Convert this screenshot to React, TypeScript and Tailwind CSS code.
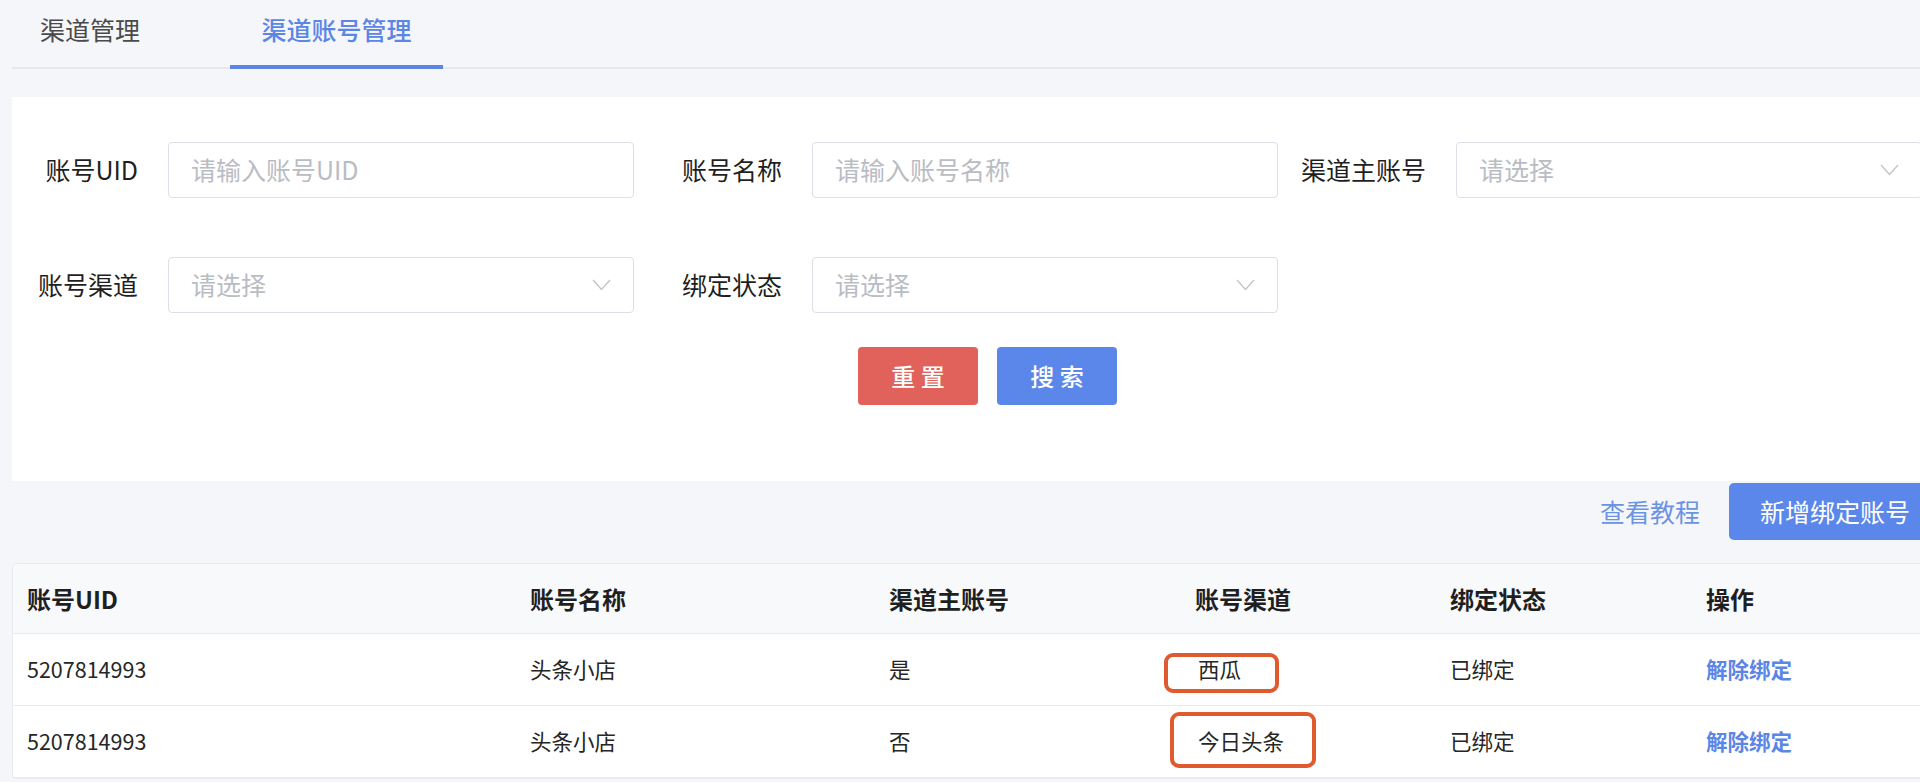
import React from "react";

function Chevron() {
  return (
    <svg width="19" height="12" viewBox="0 0 19 12" fill="none">
      <polyline points="1,1 9.5,10.5 18,1" stroke="#c0c4cc" strokeWidth="1.4" />
    </svg>
  );
}

function Field({ label, placeholder, select }: { label: string; placeholder: string; select?: boolean }) {
  return (
    <div className="flex items-center">
      <div className="w-[126px] text-right text-[25px] text-[#1f1f1f] whitespace-nowrap">{label}</div>
      <div className="ml-[30px] w-[466px] h-[56px] border border-[#dcdfe6] rounded-[4px] bg-white flex items-center justify-between pl-[22px] pr-[22px]">
        <span className="text-[25px] text-[#b9bcc3] whitespace-nowrap">{placeholder}</span>
        {select ? <Chevron /> : null}
      </div>
    </div>
  );
}

const rows = [
  { uid: "5207814993", name: "头条小店", main: "是", channel: "西瓜", status: "已绑定" },
  { uid: "5207814993", name: "头条小店", main: "否", channel: "今日头条", status: "已绑定" },
];

export default function App() {
  return (
    <div className="w-[1920px] h-[782px] overflow-hidden bg-[#f5f6fa] font-['Noto_Sans_CJK_SC',sans-serif] text-[#262626]">
      {/* tabs */}
      <div className="ml-[12px] w-[1908px] h-[69px] border-b-2 border-[#e7e8ee] flex items-stretch">
        <div className="pl-[28px] flex items-center pb-[7px] text-[25px] text-[#4a4a4a] whitespace-nowrap w-[218px]">
          渠道管理
        </div>
        <div className="w-[213px] -mb-[2px] border-b-4 border-[#5b86e5] flex items-center justify-center pb-[5px] text-[25px] font-medium text-[#5b86e5] whitespace-nowrap">
          渠道账号管理
        </div>
      </div>

      {/* search card */}
      <div className="mt-[28px] ml-[12px] w-[1951px] h-[384px] bg-white pt-[45px]">
        <div className="flex gap-[22px]">
          <Field label="账号UID" placeholder="请输入账号UID" />
          <Field label="账号名称" placeholder="请输入账号名称" />
          <Field label="渠道主账号" placeholder="请选择" select />
        </div>
        <div className="flex gap-[22px] mt-[59px]">
          <Field label="账号渠道" placeholder="请选择" select />
          <Field label="绑定状态" placeholder="请选择" select />
        </div>
        <div className="flex justify-center gap-[19px] mt-[34px]">
          <button className="w-[120px] h-[58px] rounded-[4px] bg-[#e0625b] text-white text-[24px] font-medium whitespace-pre">
            重 置
          </button>
          <button className="w-[120px] h-[58px] rounded-[4px] bg-[#5c87ea] text-white text-[24px] font-medium whitespace-pre">
            搜 索
          </button>
        </div>
      </div>

      {/* actions */}
      <div className="ml-[12px] w-[1951px] mt-[2px] flex justify-end items-center gap-[29px] pr-[22px]">
        <span className="text-[25px] text-[#6a94e2] whitespace-nowrap">查看教程</span>
        <button className="h-[57px] px-[31px] rounded-[5px] bg-[#5c87ea] text-white text-[25px] whitespace-nowrap">
          新增绑定账号
        </button>
      </div>

      {/* table */}
      <div className="mt-[23px] ml-[12px] w-[1951px] border border-[#e8eaef] rounded-[5px] bg-white">
        <div className="grid grid-cols-[502px_359px_306px_255px_256px_1fr] h-[70px] bg-[#f8f9fb] border-b border-[#e8eaef] rounded-t-[5px] items-center text-[24px] font-semibold text-[#1f1f1f]">
          <div className="pl-[14px]">账号UID</div>
          <div className="pl-[15px]">账号名称</div>
          <div className="pl-[15px]">渠道主账号</div>
          <div className="pl-[15px]">账号渠道</div>
          <div className="pl-[15px]">绑定状态</div>
          <div className="pl-[15px]">操作</div>
        </div>
        {rows.map((r, i) => (
          <div
            key={i}
            className="grid grid-cols-[502px_359px_306px_255px_256px_1fr] h-[72px] border-b border-[#e8eaef] items-center text-[21.5px] text-[#262626]"
          >
            <div className="pl-[14px]">{r.uid}</div>
            <div className="pl-[15px]">{r.name}</div>
            <div className="pl-[15px]">{r.main}</div>
            <div className="pl-[18px] h-full flex items-center relative">
              {r.channel}
              {i === 0 ? (
                <div className="absolute left-[-16px] top-[19px] w-[115px] h-[40px] border-[4px] border-[#e05a30] rounded-[9px]" />
              ) : (
                <div className="absolute left-[-10px] top-[6px] w-[146px] h-[56px] border-[4px] border-[#e05a30] rounded-[9px]" />
              )}
            </div>
            <div className="pl-[15px]">{r.status}</div>
            <div className="pl-[15px] text-[#5b86e5] font-semibold">解除绑定</div>
          </div>
        ))}
      </div>
    </div>
  );
}
